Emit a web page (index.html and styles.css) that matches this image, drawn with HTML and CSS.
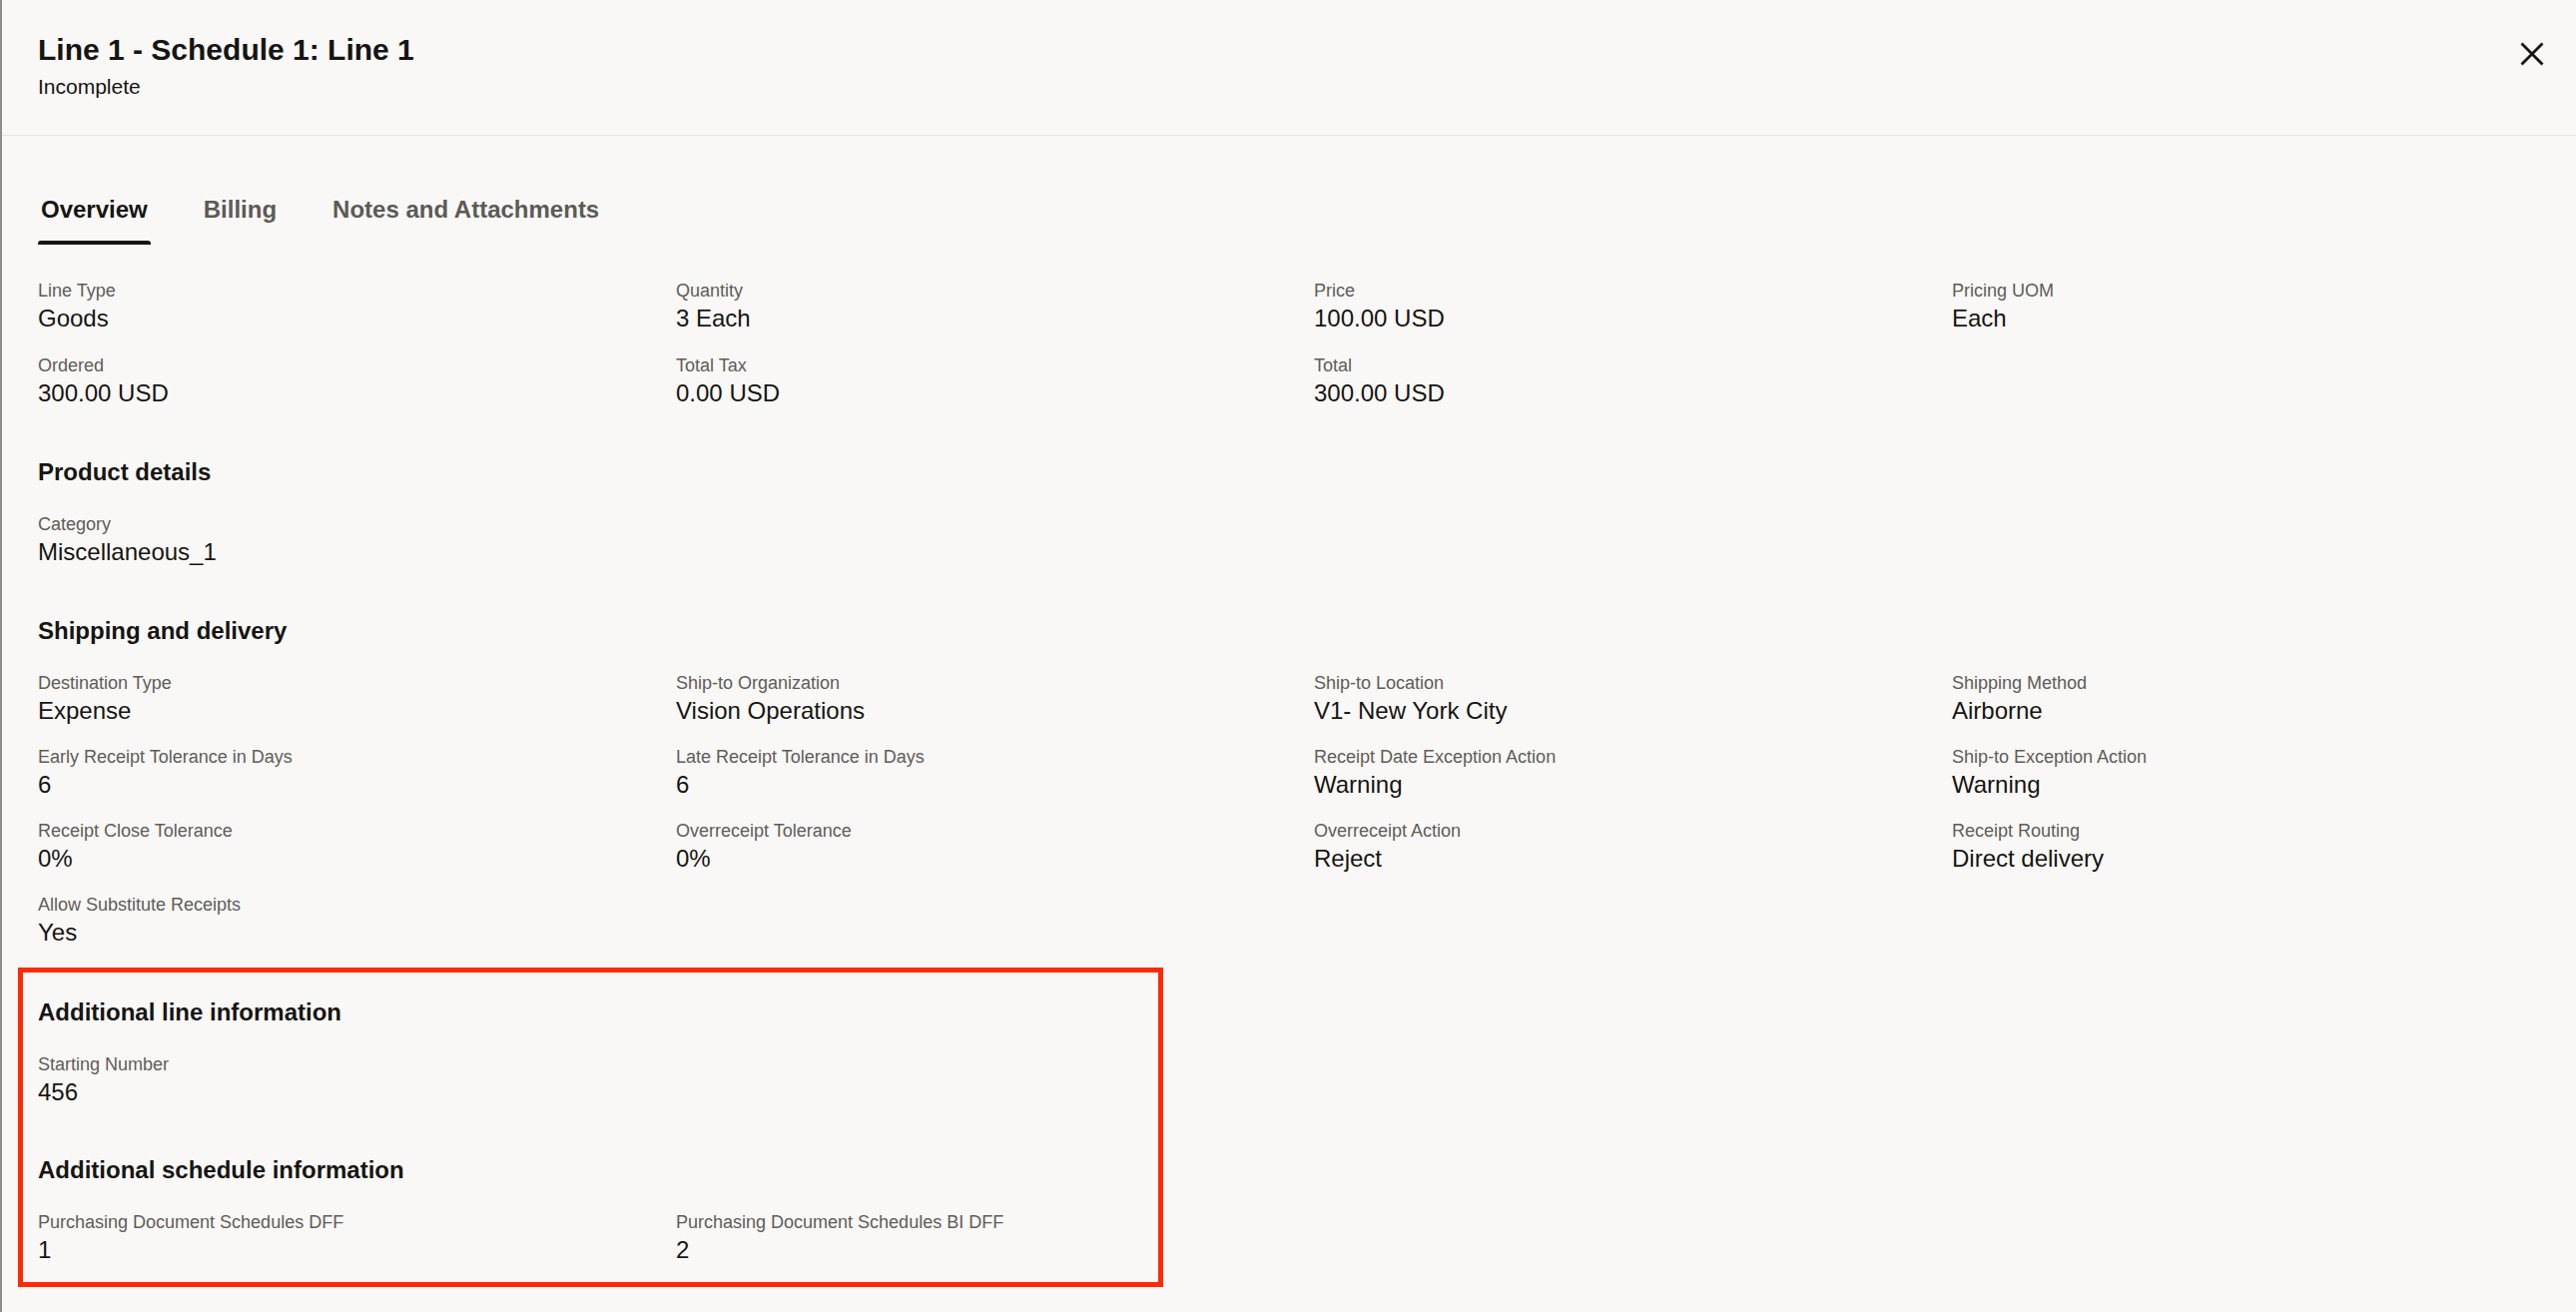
FILE: index.html
```html
<!DOCTYPE html>
<html>
<head>
    <title>Line 1 - Schedule 1: Line 1</title>
    <link rel="stylesheet" href="styles.css">
</head>
<body>
    <div class="drawer">
        <div class="header">
            <div>
                <h1 class="title">Line 1 - Schedule 1: Line 1</h1>
                <div class="subtitle">Incomplete</div>
            </div>
            <button class="close-btn" title="Close">
                <svg width="24" height="24" viewBox="0 0 24 24">
                    <path d="M1.5 1.5 L22.5 22.5 M22.5 1.5 L1.5 22.5" stroke="#161513" stroke-width="2.8" fill="none"/>
                </svg>
            </button>
        </div>

        <div class="tabs">
            <div class="tab active">Overview</div>
            <div class="tab">Billing</div>
            <div class="tab">Notes and Attachments</div>
        </div>

        <div class="content">
            <div class="fields summary">
                <div class="field"><div class="label">Line Type</div><div class="value">Goods</div></div>
                <div class="field"><div class="label">Quantity</div><div class="value">3 Each</div></div>
                <div class="field"><div class="label">Price</div><div class="value">100.00 USD</div></div>
                <div class="field"><div class="label">Pricing UOM</div><div class="value">Each</div></div>
                <div class="field"><div class="label">Ordered</div><div class="value">300.00 USD</div></div>
                <div class="field"><div class="label">Total Tax</div><div class="value">0.00 USD</div></div>
                <div class="field"><div class="label">Total</div><div class="value">300.00 USD</div></div>
            </div>

            <h2 class="section-title">Product details</h2>
            <div class="fields">
                <div class="field"><div class="label">Category</div><div class="value">Miscellaneous_1</div></div>
            </div>

            <h2 class="section-title">Shipping and delivery</h2>
            <div class="fields">
                <div class="field"><div class="label">Destination Type</div><div class="value">Expense</div></div>
                <div class="field"><div class="label">Ship-to Organization</div><div class="value">Vision Operations</div></div>
                <div class="field"><div class="label">Ship-to Location</div><div class="value">V1- New York City</div></div>
                <div class="field"><div class="label">Shipping Method</div><div class="value">Airborne</div></div>
                <div class="field"><div class="label">Early Receipt Tolerance in Days</div><div class="value">6</div></div>
                <div class="field"><div class="label">Late Receipt Tolerance in Days</div><div class="value">6</div></div>
                <div class="field"><div class="label">Receipt Date Exception Action</div><div class="value">Warning</div></div>
                <div class="field"><div class="label">Ship-to Exception Action</div><div class="value">Warning</div></div>
                <div class="field"><div class="label">Receipt Close Tolerance</div><div class="value">0%</div></div>
                <div class="field"><div class="label">Overreceipt Tolerance</div><div class="value">0%</div></div>
                <div class="field"><div class="label">Overreceipt Action</div><div class="value">Reject</div></div>
                <div class="field"><div class="label">Receipt Routing</div><div class="value">Direct delivery</div></div>
                <div class="field"><div class="label">Allow Substitute Receipts</div><div class="value">Yes</div></div>
            </div>

            <div class="highlight">
                <h2 class="section-title first">Additional line information</h2>
                <div class="fields two">
                    <div class="field"><div class="label">Starting Number</div><div class="value">456</div></div>
                </div>

                <h2 class="section-title">Additional schedule information</h2>
                <div class="fields two">
                    <div class="field"><div class="label">Purchasing Document Schedules DFF</div><div class="value">1</div></div>
                    <div class="field"><div class="label">Purchasing Document Schedules BI DFF</div><div class="value">2</div></div>
                </div>
            </div>
        </div>
    </div>
</body>
</html>
```

FILE: styles.css
```css
* {
    box-sizing: border-box;
}

body {
    margin: 0;
    font-family: "Liberation Sans", Arial, sans-serif;
    background-color: #f9f8f6;
    color: #161513;
}

.drawer {
    min-height: 100vh;
    border-left: 2px solid #8f8e8c;
}

/* header */
.header {
    display: flex;
    justify-content: space-between;
    align-items: flex-start;
    padding: 32px 32px 35px 36px;
    border-bottom: 1px solid #e8e6e3;
}

.title {
    margin: 0;
    font-size: 30px;
    line-height: 36px;
    font-weight: bold;
}

.subtitle {
    margin-top: 5px;
    font-size: 21px;
    line-height: 27px;
}

.close-btn {
    margin-top: 10px;
    width: 24px;
    height: 24px;
    padding: 0;
    border: none;
    background: none;
    cursor: pointer;
}

.close-btn svg {
    display: block;
}

/* tabs */
.tabs {
    display: flex;
    gap: 50px;
    margin-top: 58px;
    padding-left: 36px;
}

.tab {
    position: relative;
    padding: 0 3px 19px;
    font-size: 24px;
    line-height: 32px;
    font-weight: bold;
    color: #5c5a57;
}

.tab.active {
    color: #161513;
}

.tab.active::after {
    content: "";
    position: absolute;
    left: 0;
    right: 0;
    bottom: 0;
    height: 4px;
    background-color: #161513;
    border-radius: 3px 3px 0 0;
}

/* content */
.content {
    padding: 34px 38px 0 36px;
}

.fields {
    display: grid;
    grid-template-columns: repeat(4, 587px);
    column-gap: 52px;
    row-gap: 18px;
}

.fields.summary {
    row-gap: 19px;
}

.fields.two {
    grid-template-columns: repeat(2, 587px);
}

.label {
    font-size: 18px;
    line-height: 24px;
    color: #5f5c59;
}

.value {
    font-size: 24px;
    line-height: 32px;
}

.section-title {
    margin: 47px 0 24px;
    font-size: 24px;
    line-height: 32px;
    font-weight: bold;
}

.section-title.first {
    margin-top: 0;
}

.highlight {
    width: 1147px;
    margin: 19px 0 0 -20px;
    padding: 24px 15px 16px 15px;
    border: 5px solid #ff2a05;
}

.highlight .section-title {
    margin-top: 46px;
}

.highlight .section-title.first {
    margin-top: 0;
}
```
